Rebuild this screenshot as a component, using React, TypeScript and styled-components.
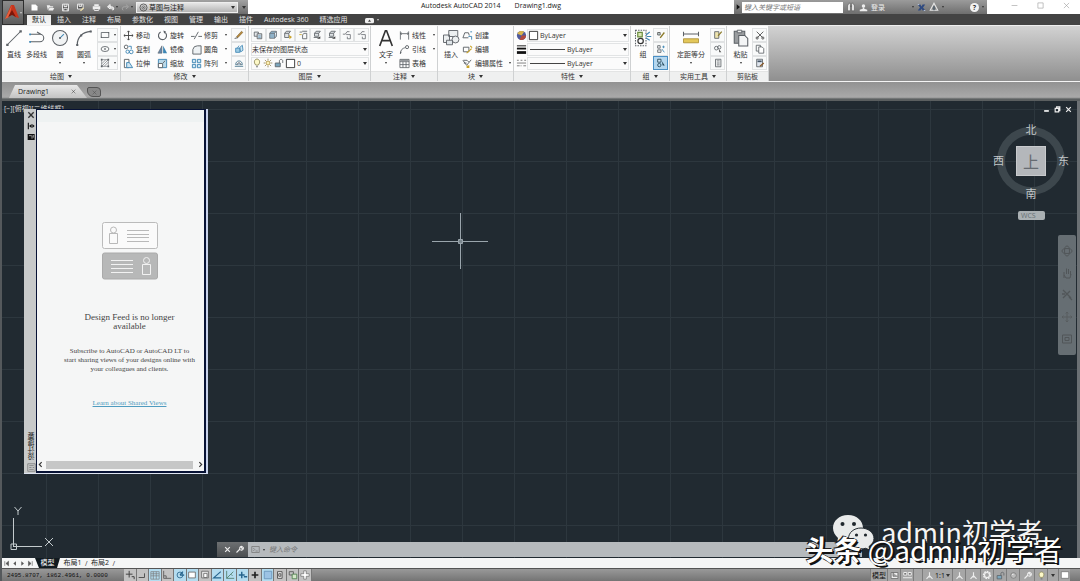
import React from "react";
import styled, { createGlobalStyle } from "styled-components";

const Global = createGlobalStyle`
  *, *::before, *::after { box-sizing: border-box; }
  html, body { margin: 0; padding: 0; }
  body {
    background: #3d3f41;
    font: 7px/9px "Open Sans", "Noto Sans CJK SC", sans-serif;
    color: #333;
    overflow: hidden;
  }
  button, input, select { font: inherit; color: inherit; margin: 0; padding: 0; border: 0; background: none; }
  button { cursor: pointer; white-space: nowrap; }
  svg { display: block; flex: none; }
  p, h2 { margin: 0; }
`;

/* ---------- icons ---------- */

const G = "#5c6166";
const B = "#3d86b4";
const Y = "#c9a227";

const glyphs: Record<string, React.ReactNode> = {
  line: <><path d="M2 10 10 2" stroke={G} strokeWidth=".7" /><path d="M.8 9.800h1.600v1.600H.8zM9.600.8h1.600v1.600H9.600z" fill={G} /></>,
  polyline: <><path d="M2 3.500h6a2.500 2.500 0 0 1 0 5H1.500M6 2l2.600 1.500" stroke={G} strokeWidth=".7" /><path d="M.8 3H2v1.200H.8zM.8 8H2v1.200H.8z" fill={B} /></>,
  circle: <><circle cx="6" cy="6" r="5" stroke={G} strokeWidth=".7" fill="#f1f3f4" /><path d="m6 6 2.600-2.600" stroke={B} strokeWidth=".7" /><circle cx="6" cy="6" r=".7" fill={G} /></>,
  arc: <><path d="M1.500 10.500C1.500 5.500 5 2 10.500 1.600" stroke={G} strokeWidth=".8" /><path d="M.8 10h1.400v1.400H.8zM9.800 1h1.400v1.400H9.800zM3.400 3.600h1.400V5H3.400z" fill={G} /></>,
  rect: <><path d="M1.500 3h9v6h-9z" stroke={G} /><path d="M1 8.200h1.400v1.400H1zM9.600 2.400H11v1.400H9.600z" fill={G} /></>,
  ellipse: <><ellipse cx="6" cy="6" rx="4.700" ry="3" stroke={G} /><path d="M6 5v2M5 6h2" stroke={G} /></>,
  hatch: <><path d="M2 2h8v8H2zM2 7l5-5M2 10l8-8M5 10l5-5" stroke={G} strokeWidth=".7" /><path d="M1 1h2v2H1zM9 1h2v2H9zM1 9h2v2H1zM9 9h2v2H9z" fill={G} /></>,
  move: <path d="M6 1v10M1 6h10M4.700 2.400 6 1l1.300 1.400M4.700 9.600 6 11l1.300-1.400M2.400 4.700 1 6l1.400 1.300M9.600 4.700 11 6 9.600 7.300" stroke="#444" />,
  rotate: <><path d="M4 2.200a4.400 4.400 0 1 0 4.200.1" stroke={G} strokeWidth="1.200" /><path d="m7 .6 2.800 1L7.800 4z" fill={G} /></>,
  trim: <path d="M0 7h4M8 7h4M3.500 10 8 2" stroke={G} />,
  copy: <><circle cx="3.400" cy="3.200" r="2" stroke={G} /><path d="M6 2.500h3v3" stroke={B} /><circle cx="5" cy="8.400" r="1.800" stroke={B} /><circle cx="9" cy="8.600" r="2" stroke={B} /></>,
  mirror: <><path d="M5.400 2v8H1z" fill="#68a" stroke={G} strokeWidth=".6" /><path d="M6.700 2v8H11z" fill={B} /></>,
  fillet: <path d="M2 11V6a5 5 0 0 1 5-4h4v9z" stroke={G} fill="#eef2f4" />,
  stretch: <><path d="M1.500 1.500h5v9h-5z" stroke={G} /><path d="M4 5h3l3.500 5.500H4z" stroke={B} fill="#cfe4f0" /></>,
  scale: <><path d="M1.500 1.500h9v9h-9z" stroke={B} fill="#b9d9ea" /><path d="M1.500 6h4.600v4.500H1.500z" fill="#fff" stroke={G} /><path d="m6.500 5.400 2.500-2.500" stroke={G} /></>,
  array: <path d="M1.500 1.500h3.600v3.600H1.500zM7 1.500h3.600v3.600H7zM1.500 7h3.600v3.600H1.500zM7 7h3.600v3.600H7z" stroke={B} fill="#d5e8f2" />,
  erase: <><path d="m3 8 6-6.500 1.600 1.400L4.600 9.200z" fill="#b98a3c" stroke="#6d5426" strokeWidth=".6" /><path d="M1 10.600c1-2 2-.5 3.400-1.200" stroke="#333" /></>,
  explode: <><path d="M2 5h5v5H2z" fill="#9ccbe3" stroke={B} /><path d="m7 4 3-2.500.8 6L8 9.500z" stroke={B} fill="#cfe6f1" /><path d="M4 5 6 2" stroke={B} /></>,
  offset: <><path d="M1 10h10M2 8c0-6 8-6 8 0z" stroke="#46728c" /><path d="M4 8c0-3 4-3 4 0" stroke={G} fill="#bcd" /></>,
  layerA: <><path d="M1.500 2.500h5v5h-5z" stroke={G} fill="#e4e7e9" /><path d="M5 4.500h5.500v6H5z" fill="#d7dce0" stroke={G} /><path d="M6.300 7h3M6.300 8.800h3" stroke={B} strokeWidth=".7" /></>,
  layerB: <><path d="m2 4 2-2.500h6L8 4zM2 4v6h5.800V4M8 10l2.200-2.400V1.600" stroke={G} fill="#8fb2c9" strokeWidth=".8" /></>,
  layerC: <><path d="m2 4 2-2.500h5L7 4zM2 4v5h5V4" stroke={G} fill="#dfe3e6" /><path d="m7.200 6 3.600 2.500-3 2.600z" fill={Y} /></>,
  layerD: <><path d="M2 2.500h3M5 1.500h6M7 4h3.500v6.500H5.500V6z" stroke={G} fill="none" /><path d="M1.500 5.500h3" stroke={Y} /></>,
  layerE: <><path d="m3 4 2-2.500h5L8 4zM3 4v3.500h5V4M2 9h6" stroke={G} fill="#dfe3e6" /><path d="m6 10.500 4-3v3z" fill="#444" /></>,
  layerF: <path d="M1 5h3l2-3h3M5 5.500h5v5H6.400V8" stroke={G} strokeWidth=".9" />,
  bulb: <><path d="M4.500 8.500C1.500 5 3 1.300 6 1.300S10.500 5 7.500 8.500z" stroke="#8a8456" fill="#fdf9c8" /><path d="M4.800 10.500h2.400" stroke={G} /></>,
  sun: <><circle cx="6" cy="6" r="2.400" stroke="#a98c3e" fill="#fdf2b8" /><path d="M6 .8v1.700M6 9.500v1.700M.8 6h1.700M9.500 6h1.700M2.300 2.300l1.200 1.200M8.500 8.500l1.200 1.200M2.300 9.700l1.200-1.200M8.500 3.500l1.200-1.200" stroke="#8d8055" /></>,
  lock: <><path d="M1.500 6h6v4.500h-6z" fill="#7ba6bd" stroke={G} /><path d="M6.500 6V3.500c0-2.400 4-2.400 4 0V6" stroke={G} /></>,
  swatch: <path d="M1.500 1.500h9v9h-9z" fill="#fff" stroke="#333" />,
  linear: <path d="M1.500 1.500v9M10.500 1.500v9M1.500 4h9M3 3 1.500 4 3 5M9 3l1.500 1L9 5" stroke={G} strokeWidth=".9" />,
  leader: <><path d="M1.500 10.500C2 6 4 4.500 7 4" stroke={G} /><circle cx="8.800" cy="3.400" r="1.700" stroke={G} /><path d="m1 11 .2-2.800L3 9.500z" fill={G} /></>,
  table: <path d="M1 1.500h10v9H1zM1 4h10M1 7.200h10M4.300 4v6.500M7.700 4v6.500M1.500 2.500h9" stroke={G} strokeWidth=".9" />,
  text: <path d="M1.800 11.300 5.600 1.200h.8l3.800 10.100M3.200 7.700h5.600" stroke="#333" strokeWidth="1.100" />,
  insert: <><path d="M4.500 1h6v4h-6zM1 4h4v5H1z" stroke={G} fill="#eceff0" strokeWidth=".6" /><circle cx="9" cy="7" r="2.300" stroke={G} fill="#eceff0" strokeWidth=".6" /><path d="M3 7.500h4v3H3z" stroke={G} fill="#dfe5e9" strokeWidth=".6" /></>,
  blockNew: <><path d="M1 8.500 3 3h4l1 3M1 8.500h6" stroke={G} /><path d="M7 7h3.500v3.500M9 2h2" stroke={B} /></>,
  blockEdit: <><path d="M1.500 3.500h6v5h-6z" stroke={G} /><path d="m5 10 5.500-5M9 2l2 2" stroke={Y} strokeWidth="1.300" /></>,
  blockAttr: <><path d="M1 2.500 5 8l5-6M2 5.500h3M1.500 2.500h4l2 2" stroke={G} /><path d="m5 8.500 3-.5v3H5z" fill={Y} /></>,
  wheel: <><circle cx="6" cy="6" r="5" fill="#4e5a9c" /><path d="M6 6 1.500 4A5 5 0 0 1 9 2z" fill="#d9b44a" /><path d="M6 6h5a5 5 0 0 1-7 4.500z" fill="#b44a3c" /></>,
  weight: <><path d="M1 2h10" stroke="#111" /><path d="M1 5h10" stroke="#111" strokeWidth="2" /><path d="M1 9.300h10" stroke="#111" strokeWidth="3" /></>,
  ltype: <path d="M1 2.500h2M5 2.500h2M9 2.500h2M1 5.500h10M1 8.500h3M5 8.500h1M8 8.500h3" stroke="#777" />,
  group: <><path d="M1 .8h7v10.400H1z" stroke={G} strokeDasharray="1 .7" strokeWidth=".7" /><path d="M2.500 2.300h3v3h-3z" stroke="#6a8d3e" fill="#dbe6b5" strokeWidth=".8" /><circle cx="4.400" cy="8" r="1.800" stroke="#333" strokeWidth=".8" /><path d="m8 4 2.500-2M8.500 5h3M8 6l2.500 1.500" stroke={B} strokeWidth=".7" /></>,
  gEdit: <><path d="M2 3h3v3H2z" stroke="#555" fill="#cdd" /><path d="m5 9.500 5-6.500" stroke="#8b7a28" strokeWidth="1.600" /></>,
  gPlus: <><path d="M2 2h3v3H2zM2 7h4v3H2z" stroke={G} /><path d="M7.500 3.500h3M9 2v3" stroke={B} /><path d="m7 6 3 4" stroke={B} /></>,
  gSel: <><path d="M2 1.500h4v3.500H2z" stroke="#245" fill="#cfe4f4" /><circle cx="4" cy="8.500" r="2" stroke="#245" /><path d="m7 4 3.500 5H8z" fill="#245" /></>,
  measure: <><path d="M1 3.300h10M1 1.800v3M11 1.800v3" stroke={G} strokeWidth=".7" /><path d="M1 6.500h10v2.700H1z" fill="#e3c75a" stroke="#a4852a" strokeWidth=".5" /></>,
  quick: <><path d="M2 2h5v8H2z" stroke={G} fill="#eee5b0" /><path d="m6 7 4.500-5" stroke="#8b7a28" strokeWidth="1.500" /></>,
  find: <><circle cx="4" cy="5" r="2.200" stroke={G} /><circle cx="7.500" cy="4" r="2" stroke={G} /><path d="m7 6 3 4H7.500z" fill="#555" /></>,
  calc: <path d="M3 1.500h6.500v9H3zM4.500 3.500h3.500M4.500 6h3.500M4.500 8.300h3.500" stroke={G} />,
  paste: <><path d="M1.500 1.500h7v8h-7z" stroke={G} fill="#9a9da0" strokeWidth=".7" /><path d="M3.500.8h3v1.700h-3z" fill="#eee" stroke={G} strokeWidth=".6" /><path d="M4.500 4.300h4l2 2v5h-6z" stroke={G} fill="#f4f5f6" strokeWidth=".7" /></>,
  cut: <><path d="m2 2 7 7M10 2 3 9" stroke="#444" /><circle cx="2.600" cy="9.600" r="1.300" stroke="#444" /><circle cx="9.400" cy="9.600" r="1.300" stroke="#444" /></>,
  pages: <><path d="M1.500 1.500h5v7h-5z" stroke={G} /><path d="M4.500 3.500h4l2 2v5.500h-6z" stroke={G} fill="#fff" /></>,
  special: <><path d="M2 1.500h7v9H2z" stroke={G} fill="#dfe6ef" /><path d="M3 3h5v2H3z" fill="#456" /><path d="m6 10 4.500-4" stroke="#8a5a2a" strokeWidth="1.600" /></>,
  new: <path d="M2 2h5.500L10 4.500V10H2z" fill="#fff" />,
  open: <path d="M1 3h4l1 1.300h3.500V6H4L2.500 9.500zM4.600 6.700H11L9.300 10H3z" fill="#eee" />,
  save: <path d="M2 1.500h8v9H2zM4 1.500v3.200h4V1.500M3.700 10.500V7h4.600v3.500" fill="#555" stroke="#f2f2f2" strokeWidth="1.200" />,
  saveAs: <><path d="M2 1.500h7.500V8H2zM4 1.500v3h3.500v-3" fill="#555" stroke="#f2f2f2" strokeWidth="1.200" /><path d="m6 10.500 4-4" stroke="#f3e1a0" strokeWidth="1.700" /></>,
  print: <><path d="M3 1.500h6V4H3zM1 4.300h10V8.500H1zM3 7.500h6v3.300H3z" fill="#eee" /><path d="M3.500 8.800h5" stroke="#666" /></>,
  undo: <path d="M3 5h4.500C11 5 11 9 9 9.600M5.500 2 2 5l3.500 3z" stroke="#f4f4f4" strokeWidth="1.300" fill="#f4f4f4" fillOpacity=".7" />,
  redo: <path d="M9 5H4.500C1 5 1 9 3 9.600M6.500 2 10 5 6.500 8" stroke="#aaa" strokeWidth="1.100" />,
  gear: <><circle cx="6" cy="6" r="4.700" stroke="#555" strokeWidth="1.200" /><circle cx="6" cy="6" r="2.200" stroke="#555" /><circle cx="6" cy="6" r=".8" fill="#555" /></>,
  gearLight: <><circle cx="6" cy="6" r="4" stroke="#f0f0f0" strokeWidth="2" strokeDasharray="2 1" /><circle cx="6" cy="6" r="3" stroke="#eee" strokeWidth="1.400" /></>,
  binoc: <path d="M2 10.500V4.500L3.500 1.500h1.700v9zM6.800 10.500v-9h1.700L10 4.500v6zM5 5h2" fill="#eee" stroke="#444" strokeWidth=".6" />,
  user: <><circle cx="6" cy="4" r="2.300" fill="#eee" /><path d="M5 6h2v1.500l4 1.500v2H1V9l4-1.500z" fill="#eee" /></>,
  exchange: <><path d="M1 2h3.500L6 4.500 7.500 2H11L8 6l3 4H7.500L6 7.500 4.500 10H1l3-4z" fill="#2f4a80" /><path d="M1 2h2M9 10h2" stroke="#cdd8ee" /></>,
  a360: <><path d="M6 1.500 10.500 10h-9z" stroke="#e6e6e6" strokeWidth="1.300" /><path d="M6 5v5" stroke="#456" strokeWidth="1.500" /></>,
  snap: <path d="M5 1v8M1 5h8M8 8h3v3" stroke="#444" strokeWidth="1.200" />,
  infer: <path d="M2 9h7V4" stroke="#555" strokeWidth="1.200" />,
  grid: <path d="M1 2h10v9H1zM1 4.500h10M1 7h10M4 2v9M7.500 2v9" stroke="#777" strokeWidth=".8" />,
  ortho: <path d="M2 1v9h9M2 7h3v3" stroke="#555" />,
  polar: <><circle cx="6" cy="6" r="3.500" stroke="#26648d" /><path d="M6 6h5M6 6l3.500-4" stroke="#26648d" strokeWidth="1.500" /></>,
  square: <path d="M2 2.500h8v7H2z" fill="#fff" stroke="#666" />,
  osnap3: <><path d="M2 1.500h8v8H2z" fill="#eee" stroke="#666" /><path d="M4.500 4h4v5h-4z" fill="#fff" stroke="#666" /></>,
  angle: <path d="M10.500 2 2 9.500h9" stroke="#26648d" strokeWidth="1.400" />,
  ducs: <path d="M2 1v9h9M2 10l8-8M7 5l2 2" stroke="#4d7c67" />,
  dyn: <path d="M4.500 2v8M1 6h7M7 8h4" stroke="#26648d" strokeWidth="1.700" />,
  plus: <path d="M6 2v8M2 6h8" stroke="#222" strokeWidth="2" />,
  box: <path d="M1.500 1.500h9v9h-9z" fill="#9cc3e4" stroke="#6591b8" />,
  card: <path d="M3 2h5.500v8H3zM4.500 4.500h2.500v3H4.500z" fill="#eee" stroke="#444" />,
  cycle: <><path d="M1.500 2h5v4h-5z" stroke="#555" /><path d="M5 5h5.500v5.500H5z" stroke="#4a7d4a" fill="#d3e6c8" /></>,
  whitePlus: <path d="M4.500 1h3v3.500H11v3H7.500V11h-3V7.500H1v-3h3.500z" fill="#fff" stroke="#666" strokeWidth=".8" />,
  scaleMan: <path d="M6 1.500V6L2 10.500M6 6l4 4.500M4 8h4" stroke="#eee" strokeWidth="1.500" />,
  views: <path d="M1 2h4v3.500H1zM7 2h4v3.500H7zM0 9h12" stroke="#eee" strokeWidth="1.300" fill="#777" />,
  wrench: <path d="m2 10 5-5M6.500 5.500a2.500 2.500 0 0 1 3-3.500L8.500 3.500l1 1L11 3.500a2.500 2.500 0 0 1-3.500 3" stroke="#eee" strokeWidth="1.500" />,
  sheet: <path d="M1.500 2h9v8h-9z" fill="#fff" stroke="#777" />,
  model: <path d="M1.500 2h9v8h-9zM4 2v5h6" fill="#eee" stroke="#666" />,
  ball: <><circle cx="6" cy="6" r="3.800" fill="#bbb" stroke="#777" /><path d="M4 4.500h2" stroke="#fff" /></>,
  close: <path d="m2 2 8 8M10 2l-8 8" stroke="currentColor" strokeWidth="2" />,
  min: <path d="M2 8.500h8" stroke="currentColor" strokeWidth="3" />,
  restore: <path d="M2 4h6v6H2zM4.500 4V1.500H10V8H8" stroke="currentColor" strokeWidth="2" />,
  thinMin: <path d="M1 6h10" stroke="currentColor" />,
  thinMax: <path d="M1.500 1.500h9v9h-9z" stroke="currentColor" />,
  thinClose: <path d="m1.500 1.500 9 9M10.500 1.500l-9 9" stroke="currentColor" />,
  dock: <><path d="M2 1v10" stroke="#111" strokeWidth="1.700" /><path d="m3 6 4-3v6zM8 3l3.500 3L8 9z" fill="#111" /></>,
  props: <><path d="M1 1.500h10.500v9H1z" fill="#111" /><path d="M3 4h4M7.500 4v4.500M9.500 3v4" stroke="#ddd" /></>,
  feed: <path d="M1 1h10v10H1zM3 3.500h6M3 6h3M7.500 6h2M3 8.500h6" stroke="#777" />,
  first: <path d="M3 2v8M9.500 2 5 6l4.500 4z" stroke="#555" fill="#555" />,
  prev: <path d="M8.500 2 4 6l4.500 4z" fill="#555" />,
  next: <path d="M4 2l4.500 4L4 10z" fill="#555" />,
  last: <path d="M9 2v8M2.500 2 7 6l-4.500 4z" stroke="#555" fill="#555" />,
  prompt: <path d="M1 2h10v8H1zM3 4l2 2-2 2M6 8h3" stroke="#777" />,
  chevL: <path d="M8 2 4 6l4 4" stroke="#333" strokeWidth="2" />,
  chevR: <path d="m4 2 4 4-4 4" stroke="#333" strokeWidth="2" />,
  play: <path d="M4 2l5 4-5 4z" fill="#111" />,
  pill: <><rect x="0" y="2.500" width="12" height="7" rx="2" fill="#eee" /><path d="M4 7.500 6 4.800l2 2.700z" fill="#444" /></>,
  hand: <path d="M3 11V5M5.500 7V1.500M7.500 7V2M9.500 8V4M3 8l2 3h4l1-4" stroke="#333" />,
  orbit: <><ellipse cx="6" cy="6" rx="5" ry="2.500" stroke="#333" /><ellipse cx="6" cy="6" rx="2.500" ry="5" stroke="#333" /></>,
  zoomX: <path d="m2 1 8 8M9 2 2 9M8 8l3 3M1 5h3" stroke="#333" strokeWidth="1.300" />,
  motion: <path d="M1.500 2h9v8h-9zM4 4.500h4v3H4z" stroke="#333" />,
};

const Icon = ({ name, size = 11 }: { name: string; size?: number }) => (
  <svg width={size} height={size} viewBox="0 0 12 12" fill="none" aria-hidden="true">{glyphs[name]}</svg>
);

const Caret = styled.i<{ $small?: boolean; $light?: boolean }>`
  flex: none;
  width: 0;
  height: 0;
  border: solid transparent;
  border-width: ${(p) => (p.$small ? "2px 1px 0" : "3px 2px 0")};
  border-top-color: ${(p) => (p.$light ? "#ccc" : "#333")};
  pointer-events: none;
`;

/* ---------- title area ---------- */

const Shell = styled.div`
  position: relative;
`;

const Frame = styled.div`
  display: flex;
  flex-direction: column;
  min-height: 100vh;
  border-left: 2px solid #55595c;
`;

const Header = styled.header`
  display: flex;
  background: #434343;
`;

const Logo = styled.button`
  display: flex;
  align-items: center;
  justify-content: center;
  gap: 1px;
  width: 22px;
  height: 25px;
  background: linear-gradient(#8c8c8c, #5c5c5c);
  border: 1px solid #2e2e2e;
`;

const HeaderMain = styled.div`
  flex: 1;
  min-width: 0;
`;

const TitleBar = styled.div`
  display: flex;
  height: 14px;
  background: #fff;
`;

const QuickBar = styled.div`
  display: flex;
  align-items: center;
  gap: 1px;
  width: 224px;
  padding-left: 3px;
  background: linear-gradient(#a2a2a2, #6d6d6d);
`;

const QuickButton = styled.button`
  display: flex;
  align-items: center;
  justify-content: center;
  gap: 1px;
  flex: 1;
  height: 13px;
`;

const QuickSet = styled.div`
  display: flex;
  width: 108px;
`;

const Workspace = styled.label`
  display: flex;
  align-items: center;
  gap: 1px;
  flex: 1;
  height: 11px;
  padding: 0 2px;
  background: linear-gradient(#e6e6e6, #b4b4b4);
  border: 1px solid #eee;
  color: #222;
`;

const BareSelect = styled.select`
  appearance: none;
  flex: 1;
  min-width: 0;
  height: 11px;
  outline: 0;
`;

const QuickEnd = styled.button`
  display: flex;
  align-items: center;
  justify-content: center;
  width: 9px;
  height: 14px;
`;

const Title = styled.div`
  display: flex;
  flex: 1;
  justify-content: center;
  gap: 14px;
  padding-top: 1px;
  color: #222;
  white-space: nowrap;
`;

const SearchArea = styled.div`
  display: flex;
  align-items: center;
  width: 253px;
  background: linear-gradient(#9b9b9b, #6e6e6e);
  color: #eee;
`;

const SearchInput = styled.input`
  width: 101px;
  height: 11px;
  padding: 0 2px;
  background: #fff;
  font-style: italic;
  &::placeholder { color: #777; opacity: 1; }
`;

const AccountTools = styled.div`
  display: flex;
  align-items: center;
  flex: 1;
  gap: 3px;
  padding: 0 3px;
`;

const FlatButton = styled.button`
  display: flex;
  align-items: center;
  gap: 3px;
`;

const Spacer = styled.span`
  flex: 1;
`;

const Help = styled.span`
  width: 9px;
  height: 9px;
  border-radius: 50%;
  background: #f2f2f2;
  color: #333;
  font-weight: 700;
  line-height: 9px;
  text-align: center;
`;

const WindowButtons = styled.div`
  display: flex;
  align-items: center;
  justify-content: space-around;
  width: 93px;
  padding: 0 0 4px 14px;
  color: #999;
`;

const RibbonTabs = styled.nav`
  display: flex;
  align-items: flex-end;
  height: 11px;
  padding-left: 3px;
`;

const RibbonTab = styled.button<{ $active?: boolean }>`
  height: 10px;
  padding: 0 5px;
  min-width: 24px;
  margin-right: 1px;
  line-height: 10px;
  color: ${(p) => (p.$active ? "#222" : "#e2e2e2")};
  background: ${(p) => (p.$active ? "linear-gradient(#e8e8e8, #f7f7f7)" : "none")};
`;

const TabMenu = styled.button`
  display: flex;
  align-items: center;
  gap: 3px;
  height: 10px;
  margin-left: 12px;
`;

/* ---------- ribbon ---------- */

const Ribbon = styled.div`
  display: flex;
  height: 57px;
  border-top: 1px solid #eee;
  border-bottom: 1px solid #f4f4f4;
  background: linear-gradient(#d2d2d2, #8f8f8f);
`;

const Panel = styled.section<{ $w: number }>`
  display: flex;
  flex-direction: column;
  flex: none;
  width: ${(p) => p.$w}px;
  background: #fdfdfd;
  border-right: 1px solid #cfd1d2;
`;

const PanelBody = styled.div`
  display: flex;
  flex: 1;
  padding: 2px 1px 0 2px;
`;

const PanelTitle = styled.button`
  display: flex;
  align-items: center;
  justify-content: center;
  gap: 4px;
  height: 10px;
  background: #eff0f0;
  border-top: 1px solid #e3e4e4;
`;

const BigTool = styled.button<{ $w: number }>`
  display: flex;
  flex-direction: column;
  align-items: center;
  gap: 3px;
  width: ${(p) => p.$w}px;
  height: 40px;
  padding-top: 1px;
`;

const ToolColumn = styled.div<{ $grow?: boolean }>`
  display: flex;
  flex-direction: column;
  flex: ${(p) => (p.$grow ? 1 : "none")};
  min-width: 0;
`;

const Tool = styled.button<{ $w?: number }>`
  display: flex;
  align-items: center;
  gap: 2px;
  width: ${(p) => (p.$w ? p.$w + "px" : "auto")};
  height: 14px;
`;

const SmallTool = styled.button<{ $active?: boolean; $wide?: boolean }>`
  display: flex;
  align-items: center;
  justify-content: center;
  gap: 4px;
  width: ${(p) => (p.$wide ? 21 : 15)}px;
  height: 14px;
  border: 1px solid ${(p) => (p.$active ? "#4a8fc4" : "#e0e2e3")};
  background: ${(p) => (p.$active ? "#b5d7ef" : "#f9fafa")};
`;

const ToolRow = styled.div`
  display: flex;
  align-items: center;
  height: 14px;
`;

const Combo = styled.label`
  display: flex;
  align-items: center;
  flex: 1;
  gap: 1px;
  height: 13px;
  padding-right: 1px;
  border: 1px solid #e2e4e5;
  background: #fbfbfb;
`;

const LineSample = styled.i`
  width: 35px;
  margin: 0 1px 0 2px;
  border-top: 1px solid #444;
`;

/* ---------- file tabs ---------- */

const FileTabs = styled.div`
  display: flex;
  align-items: flex-end;
  height: 19px;
  padding: 0 0 3px 7px;
  background: linear-gradient(#929292, #a9a9a9 80%, #5b5f60 90%);
`;

const FileTab = styled.div`
  display: flex;
  align-items: center;
  justify-content: space-between;
  width: 78px;
  height: 13px;
  padding: 0 11px 0 9px;
  background: linear-gradient(#e8e8e8, #c3c3c3);
  clip-path: polygon(6px 0, 68px 0, 100% 100%, 0 100%);
  color: #222;
`;

const NewTab = styled.button`
  display: flex;
  align-items: center;
  justify-content: center;
  width: 14px;
  height: 10px;
  margin-bottom: 1px;
  border: 1px solid #555;
  border-radius: 2px 4px 2px 6px;
  background: #888;
  color: #444;
`;

/* ---------- drawing canvas ---------- */

const Canvas = styled.main`
  position: relative;
  flex: 1;
  min-height: 320px;
  border-right: 3px solid #6b7074;
  background-color: #212a31;
  background-image:
    linear-gradient(90deg, #2d373e 1px, transparent 1px),
    linear-gradient(#2d373e 1px, transparent 1px);
  background-size: 52px 52px;
  background-position: 44px 0, 0 8px;
  overflow: hidden;
`;

const ViewLabel = styled.div`
  position: absolute;
  left: 2px;
  top: 3px;
  color: #ddd;
`;

const Palette = styled.aside`
  position: absolute;
  left: 22px;
  top: 8px;
  display: flex;
  width: 184px;
  height: 365px;
  background: #c8caca;
  border-right: 2px solid #c9d3ec;
  border-bottom: 1px solid #dde3f0;
`;

const PaletteRail = styled.div`
  display: flex;
  flex-direction: column;
  align-items: center;
  gap: 3px;
  width: 12px;
  padding: 2px 0 1px 2px;
`;

const RailTitle = styled.span`
  writing-mode: vertical-rl;
  transform: rotate(180deg);
  color: #222;
  line-height: 9px;
`;

const PalettePage = styled.div`
  display: flex;
  flex-direction: column;
  flex: 1;
  border: 1px solid #071235;
  border-width: 1px 2px 2px 1px;
  background: #f5f6f6;
`;

const PaletteHead = styled.div`
  height: 12px;
  background: #eef2f2;
`;

const FeedMessage = styled.div`
  display: flex;
  flex-direction: column;
  align-items: center;
  flex: 1;
  padding: 100px 0 0 18px;
  color: #444;
  font-family: "Liberation Serif", "Noto Sans CJK SC", serif;
  text-align: center;
`;

const FeedHeading = styled.h2`
  margin-top: 33px;
  width: 100px;
  font-size: 9px;
  line-height: 9px;
  font-weight: 400;
`;

const FeedText = styled.p`
  margin-top: 16px;
  white-space: pre-line;
`;

const FeedLink = styled.a`
  margin-top: 25px;
  color: #4f9cc0;
`;

const ScrollBar = styled.div`
  display: flex;
  align-items: center;
  gap: 1px;
  height: 11px;
  padding-bottom: 2px;
`;

const ScrollThumb = styled.div`
  flex: 1;
  height: 8px;
  margin: 0 3px 0 1px;
  background: #c6c7c7;
`;

const Crosshair = styled.svg`
  position: absolute;
  left: 430px;
  top: 112px;
`;

const Ucs = styled.svg`
  position: absolute;
  left: 8px;
  bottom: 6px;
`;

const DocButtons = styled.div`
  position: absolute;
  right: 5px;
  top: 5px;
  display: flex;
  gap: 4px;
  color: #eee;
`;

const Compass = styled.div`
  position: absolute;
  right: 12px;
  top: 26px;
  display: grid;
  place-items: center;
  width: 68px;
  height: 68px;
  border: 8px solid #3d474d;
  border-radius: 50%;
`;

const CompassTop = styled.button`
  width: 30px;
  height: 30px;
  background: #b4b7bb;
  border: 1px solid #c8cacd;
  color: #666b71;
  font: 16px/26px "Noto Sans CJK SC", sans-serif;
`;

const CompassMark = styled.span<{ $side: "n" | "e" | "s" | "w" }>`
  position: absolute;
  color: #c3c7ca;
  font-size: 11px;
  line-height: 12px;
  ${(p) => ({
    n: "top: -11px;",
    s: "bottom: -13px;",
    e: "right: -12px;",
    w: "left: -12px;",
  })[p.$side]}
`;

const Wcs = styled.button`
  position: absolute;
  right: 32px;
  top: 110px;
  width: 27px;
  height: 9px;
  padding-left: 3px;
  border-radius: 2px;
  background: #aab0b3;
  color: #687075;
  line-height: 9px;
  text-align: left;
`;

const NavBar = styled.div`
  position: absolute;
  right: 1px;
  top: 134px;
  display: flex;
  flex-direction: column;
  align-items: center;
  justify-content: space-between;
  width: 18px;
  height: 120px;
  padding: 10px 0;
  border-radius: 2px;
  background: #666e73;
`;

const NavItem = styled.button`
  opacity: .4;
`;

const CommandLine = styled.div`
  position: absolute;
  left: 215px;
  bottom: 1px;
  display: flex;
  align-items: center;
  width: 60%;
  height: 15px;
  background: #b6babd;
`;

const CommandTools = styled.div`
  display: flex;
  align-items: center;
  justify-content: space-evenly;
  width: 31px;
  height: 15px;
  padding-left: 3px;
  background: linear-gradient(#6d7072, #4c4f51);
  color: #eee;
`;

const CommandInput = styled.input`
  flex: 1;
  min-width: 0;
  padding-left: 4px;
  font-style: italic;
  &::placeholder { color: #777; opacity: 1; }
`;

/* ---------- bottom bars ---------- */

const LayoutTabs = styled.nav`
  display: flex;
  align-items: center;
  height: 10px;
  padding-left: 1px;
  background: #f5f6f6;
`;

const LayoutStep = styled.button`
  width: 8px;
  height: 9px;
`;

const LayoutTab = styled.button<{ $active?: boolean }>`
  height: 10px;
  min-width: 25px;
  padding: 0 3px;
  line-height: 10px;
  color: ${(p) => (p.$active ? "#fff" : "#222")};
  background: ${(p) => (p.$active ? "#111a1f" : "none")};
  clip-path: ${(p) => (p.$active ? "polygon(0 0, 100% 0, 22px 100%, 4px 100%)" : "none")};
`;

const StatusBar = styled.footer`
  display: flex;
  align-items: center;
  height: 13px;
  background: linear-gradient(#999, #747474);
  border-top: 1px solid #555;
`;

const Coordinates = styled.span`
  width: 122px;
  padding-left: 5px;
  font-family: "Liberation Mono", monospace;
  font-size: 6px;
  color: #111;
  white-space: nowrap;
`;

const Toggles = styled.div`
  display: flex;
  width: 188px;
`;

const Toggle = styled.button<{ $on?: boolean }>`
  display: flex;
  align-items: center;
  justify-content: center;
  flex: 1;
  height: 12px;
  border-right: 1px solid #777;
  background: ${(p) => (p.$on ? "#b4dcef" : "#c2c2c2")};
`;

const StatusButton = styled.button<{ $w: number }>`
  display: flex;
  align-items: center;
  justify-content: center;
  gap: 1px;
  width: ${(p) => p.$w}px;
  height: 12px;
  color: #111;
  background: #a6a6a6;
  border-left: 1px solid #7d7d7d;
`;

const Grip = styled.span`
  width: 10px;
`;

/* ---------- overlay marks ---------- */

const UpperMark = styled.div`
  position: absolute;
  right: 37px;
  bottom: 31px;
  display: flex;
  align-items: center;
  gap: 6px;
  color: #f5f5f5;
  font: 27px/36px "Noto Sans CJK SC", sans-serif;
  text-shadow: 1px 1px 1px #222;
  white-space: nowrap;
`;

const LowerMark = styled.div`
  position: absolute;
  right: 18px;
  bottom: 13px;
  color: #fff;
  font: 28px/38px "Noto Sans CJK SC", sans-serif;
  text-shadow: 2px 2px 0 #111, -1px -1px 0 #222, 1px 0 0 #111;
  white-space: nowrap;
`;

const tabs = ["默认", "插入", "注释", "布局", "参数化", "视图", "管理", "输出", "插件", "Autodesk 360", "精选应用"];
const quick = ["new", "open", "save", "saveAs", "print"];
const modify = [
  [["move", "移动"], ["copy", "复制"], ["stretch", "拉伸"]],
  [["rotate", "旋转"], ["mirror", "镜像"], ["scale", "缩放"]],
  [["trim", "修剪"], ["fillet", "圆角"], ["array", "阵列"]],
];
const layerTools = ["layerA", "layerB", "layerC", "layerD", "layerE", "layerE", "layerF", "layerF"];
const toggles: [string, boolean][] = [
  ["snap", false], ["infer", false], ["grid", true], ["ortho", false], ["polar", true],
  ["square", true], ["osnap3", false], ["angle", true], ["ducs", true], ["dyn", true],
  ["plus", false], ["box", true], ["card", false], ["cycle", false], ["whitePlus", false],
];

const Big = ({ icon, label, w, caret }: { icon: string; label: string; w: number; caret?: boolean }) => (
  <BigTool $w={w}>
    <Icon name={icon} size={18} />
    <span>{label}</span>
    {caret && <Caret $small />}
  </BigTool>
);

const Footer = ({ children, caret = true }: { children: string; caret?: boolean }) => (
  <PanelTitle>{children}{caret && <Caret />}</PanelTitle>
);

export default function App() {
  return (
    <Shell>
      <Global />
      <Frame>
        <Header>
          <Logo aria-label="应用程序菜单">
            <svg width="14" height="17" viewBox="0 0 14 17">
              <path d="M6 1h3l5 13-4-1-3-6-3 6-4 2z" fill="#c7351c" />
              <path d="M7 1 4 13l-4 2z" fill="#e7623f" />
              <path d="m7 6 4 7-4-2-4 2z" fill="#7c1609" />
            </svg>
            <Caret $small $light />
          </Logo>
          <HeaderMain>
            <TitleBar>
              <QuickBar>
                <QuickSet>
                  {quick.map((n) => <QuickButton key={n} aria-label={n}><Icon name={n} size={9} /></QuickButton>)}
                  <QuickButton aria-label="undo"><Icon name="undo" size={9} /><Caret $small /></QuickButton>
                  <QuickButton aria-label="redo"><Icon name="redo" size={9} /><Caret $small /></QuickButton>
                </QuickSet>
                <Workspace>
                  <Icon name="gear" size={9} />
                  <BareSelect aria-label="工作空间"><option>草图与注释</option></BareSelect>
                  <Caret />
                </Workspace>
                <QuickEnd aria-label="自定义"><Caret /></QuickEnd>
              </QuickBar>
              <Title><span>Autodesk AutoCAD 2014</span><span>Drawing1.dwg</span></Title>
              <SearchArea>
                <Icon name="play" size={8} />
                <SearchInput aria-label="搜索" placeholder="键入关键字或短语" />
                <AccountTools>
                  <FlatButton aria-label="搜索"><Icon name="binoc" size={10} /></FlatButton>
                  <FlatButton><Icon name="user" size={9} />登录</FlatButton>
                  <Spacer />
                  <Caret $small />
                  <FlatButton aria-label="Exchange"><Icon name="exchange" size={9} /></FlatButton>
                  <FlatButton aria-label="A360"><Icon name="a360" size={10} /><Caret $small /></FlatButton>
                  <Spacer />
                  <FlatButton aria-label="帮助"><Help>?</Help><Caret $small /></FlatButton>
                </AccountTools>
              </SearchArea>
              <WindowButtons>
                <FlatButton aria-label="最小化"><Icon name="thinMin" size={7} /></FlatButton>
                <FlatButton aria-label="最大化"><Icon name="thinMax" size={7} /></FlatButton>
                <FlatButton aria-label="关闭"><Icon name="thinClose" size={7} /></FlatButton>
              </WindowButtons>
            </TitleBar>
            <RibbonTabs>
              {tabs.map((t, i) => <RibbonTab key={t} $active={i === 0}>{t}</RibbonTab>)}
              <TabMenu aria-label="功能区显示"><Icon name="pill" size={9} /><Caret $small $light /></TabMenu>
            </RibbonTabs>
          </HeaderMain>
        </Header>

        <Ribbon>
          <Panel $w={119}>
            <PanelBody>
              <Big icon="line" label="直线" w={20} />
              <Big icon="polyline" label="多段线" w={25} />
              <Big icon="circle" label="圆" w={22} caret />
              <Big icon="arc" label="圆弧" w={26} caret />
              <ToolColumn>
                {["rect", "ellipse", "hatch"].map((n) => (
                  <SmallTool key={n} $wide aria-label={n}><Icon name={n} size={10} /><Caret $small /></SmallTool>
                ))}
              </ToolColumn>
            </PanelBody>
            <Footer>绘图</Footer>
          </Panel>

          <Panel $w={128}>
            <PanelBody>
              {modify.map((col, c) => (
                <ToolColumn key={c}>
                  {col.map(([icon, label]) => (
                    <Tool key={icon} $w={c === 2 ? 40 : 34}>
                      <Icon name={icon} />{label}{c === 2 && <><Spacer /><Caret $small /><Spacer /></>}
                    </Tool>
                  ))}
                </ToolColumn>
              ))}
              <ToolColumn>
                {["erase", "explode", "offset"].map((n) => (
                  <SmallTool key={n} aria-label={n}><Icon name={n} size={10} /></SmallTool>
                ))}
              </ToolColumn>
            </PanelBody>
            <Footer>修改</Footer>
          </Panel>

          <Panel $w={122}>
            <PanelBody>
              <ToolColumn $grow>
                <ToolRow>
                  {layerTools.map((n, i) => <SmallTool key={i} aria-label={n}><Icon name={n} size={10} /></SmallTool>)}
                </ToolRow>
                <ToolRow>
                  <Combo><BareSelect aria-label="图层状态"><option>未保存的图层状态</option></BareSelect><Caret /></Combo>
                </ToolRow>
                <ToolRow>
                  <Combo>
                    <Icon name="bulb" size={10} /><Icon name="sun" size={10} /><Icon name="lock" size={10} /><Icon name="swatch" />
                    <BareSelect aria-label="图层"><option>0</option></BareSelect><Caret />
                  </Combo>
                </ToolRow>
              </ToolColumn>
            </PanelBody>
            <Footer>图层</Footer>
          </Panel>

          <Panel $w={67}>
            <PanelBody>
              <Big icon="text" label="文字" w={26} caret />
              <ToolColumn>
                <Tool $w={36}><Icon name="linear" />线性<Spacer /><Caret $small /></Tool>
                <Tool $w={36}><Icon name="leader" />引线<Spacer /><Caret $small /></Tool>
                <Tool $w={36}><Icon name="table" />表格</Tool>
              </ToolColumn>
            </PanelBody>
            <Footer>注释</Footer>
          </Panel>

          <Panel $w={76}>
            <PanelBody>
              <Big icon="insert" label="插入" w={22} />
              <ToolColumn>
                <Tool $w={49}><Icon name="blockNew" />创建</Tool>
                <Tool $w={49}><Icon name="blockEdit" />编辑</Tool>
                <Tool $w={49}><Icon name="blockAttr" />编辑属性<Spacer /><Caret $small /></Tool>
              </ToolColumn>
            </PanelBody>
            <Footer>块</Footer>
          </Panel>

          <Panel $w={117}>
            <PanelBody>
              <ToolColumn $grow>
                <ToolRow>
                  <Icon name="wheel" />
                  <Combo><Icon name="swatch" /><BareSelect aria-label="颜色"><option>ByLayer</option></BareSelect><Caret /></Combo>
                </ToolRow>
                <ToolRow>
                  <Icon name="weight" />
                  <Combo><LineSample /><BareSelect aria-label="线宽"><option>ByLayer</option></BareSelect><Caret /></Combo>
                </ToolRow>
                <ToolRow>
                  <Icon name="ltype" />
                  <Combo><LineSample /><BareSelect aria-label="线型"><option>ByLayer</option></BareSelect><Caret /></Combo>
                </ToolRow>
              </ToolColumn>
            </PanelBody>
            <Footer>特性</Footer>
          </Panel>

          <Panel $w={39}>
            <PanelBody>
              <Big icon="group" label="组" w={20} />
              <ToolColumn>
                <SmallTool aria-label="编辑组"><Icon name="gEdit" size={10} /></SmallTool>
                <SmallTool aria-label="添加到组"><Icon name="gPlus" size={10} /></SmallTool>
                <SmallTool $active aria-label="选择组"><Icon name="gSel" size={10} /></SmallTool>
              </ToolColumn>
            </PanelBody>
            <Footer>组</Footer>
          </Panel>

          <Panel $w={57}>
            <PanelBody>
              <Big icon="measure" label="定距等分" w={38} caret />
              <ToolColumn>
                {["quick", "find", "calc"].map((n) => (
                  <SmallTool key={n} aria-label={n}><Icon name={n} size={10} /></SmallTool>
                ))}
              </ToolColumn>
            </PanelBody>
            <Footer>实用工具</Footer>
          </Panel>

          <Panel $w={42}>
            <PanelBody>
              <Big icon="paste" label="粘贴" w={23} caret />
              <ToolColumn>
                {["cut", "pages", "special"].map((n) => (
                  <SmallTool key={n} aria-label={n}><Icon name={n} size={10} /></SmallTool>
                ))}
              </ToolColumn>
            </PanelBody>
            <Footer caret={false}>剪贴板</Footer>
          </Panel>
        </Ribbon>

        <FileTabs>
          <FileTab>Drawing1<Icon name="thinClose" size={5} /></FileTab>
          <NewTab aria-label="新图形"><Icon name="thinClose" size={5} /></NewTab>
        </FileTabs>

        <Canvas>
          <ViewLabel>[−][俯视][二维线框]</ViewLabel>

          <Palette>
            <PaletteRail>
              <Icon name="close" size={8} />
              <Icon name="dock" size={8} />
              <Icon name="props" size={8} />
              <Spacer />
              <RailTitle>设计提要</RailTitle>
              <Icon name="feed" size={9} />
            </PaletteRail>
            <PalettePage>
              <PaletteHead />
              <FeedMessage>
                <svg width="56" height="58" viewBox="0 0 56 58" fill="none">
                  <rect x=".5" y=".5" width="55" height="26" rx="2" stroke="#bbb" fill="#fafafa" />
                  <rect x=".5" y="31" width="55" height="26" rx="2" fill="#b7b8b8" stroke="#aaa" />
                  <g stroke="#b9b9b9">
                    <circle cx="11.500" cy="8" r="3" />
                    <path d="M7.500 11.500h8v10h-8z" />
                    <path d="M25 8.500h22M25 12.500h22M25 15.500h22M25 19.500h22" />
                  </g>
                  <g stroke="#f2f2f2">
                    <circle cx="44.500" cy="38.500" r="3" />
                    <path d="M40.500 42.500h8v10h-8z" />
                    <path d="M9 38.500h22M9 42.500h22M9 46.500h22M9 50.500h22" />
                  </g>
                </svg>
                <FeedHeading>Design Feed is no longer available</FeedHeading>
                <FeedText>{"Subscribe to AutoCAD or AutoCAD LT to\nstart sharing views of your designs online with\nyour colleagues and clients."}</FeedText>
                <FeedLink href="#">Learn about Shared Views</FeedLink>
              </FeedMessage>
              <ScrollBar>
                <Icon name="chevL" size={7} /><ScrollThumb /><Icon name="chevR" size={7} />
              </ScrollBar>
            </PalettePage>
          </Palette>

          <Crosshair width="56" height="56" viewBox="0 0 56 56" fill="none" stroke="#9aa5ac">
            <path d="M28.500 0v56M0 28.500h56" />
            <path d="M26.500 26.500h4v4h-4z" fill="#7a868d" />
          </Crosshair>

          <Ucs width="44" height="46" viewBox="0 0 44 46" fill="none" stroke="#c3cacd">
            <path d="M3.500 12v29M4 40.500h28M1 38h5.500v5.500H1z" />
            <path d="m4.500 1 3.500 4 3.500-4M8 5v4M35 32l8 8M43 32l-8 8" />
          </Ucs>

          <DocButtons>
            <FlatButton aria-label="最小化图形"><Icon name="min" size={7} /></FlatButton>
            <FlatButton aria-label="还原图形"><Icon name="restore" size={7} /></FlatButton>
            <FlatButton aria-label="关闭图形"><Icon name="close" size={7} /></FlatButton>
          </DocButtons>

          <Compass>
            <CompassTop>上</CompassTop>
            <CompassMark $side="n">北</CompassMark>
            <CompassMark $side="e">东</CompassMark>
            <CompassMark $side="s">南</CompassMark>
            <CompassMark $side="w">西</CompassMark>
          </Compass>
          <Wcs>WCS</Wcs>
          <NavBar>
            {["orbit", "hand", "zoomX", "move", "motion"].map((n) => (
              <NavItem key={n} aria-label={n}><Icon name={n} size={12} /></NavItem>
            ))}
          </NavBar>

          <CommandLine>
            <CommandTools><Icon name="close" size={7} /><Icon name="wrench" size={9} /></CommandTools>
            <FlatButton aria-label="最近使用的命令"><Spacer /><Icon name="prompt" size={9} /><Caret $small /></FlatButton>
            <CommandInput aria-label="命令" placeholder="键入命令" />
          </CommandLine>
        </Canvas>

        <LayoutTabs>
          {["first", "prev", "next", "last"].map((n) => (
            <LayoutStep key={n} aria-label={n}><Icon name={n} size={7} /></LayoutStep>
          ))}
          <LayoutTab $active>模型</LayoutTab>
          <LayoutTab>布局1</LayoutTab>/
          <LayoutTab>布局2</LayoutTab>/
        </LayoutTabs>

        <StatusBar>
          <Coordinates>2495.8707, 1862.4961, 0.0000</Coordinates>
          <Toggles>
            {toggles.map(([n, on]) => <Toggle key={n} $on={on} aria-label={n}><Icon name={n} size={10} /></Toggle>)}
          </Toggles>
          <Spacer />
          <StatusButton $w={17}>模型</StatusButton>
          <StatusButton $w={13} aria-label="布局"><Icon name="model" size={9} /></StatusButton>
          <StatusButton $w={13} aria-label="快速查看"><Icon name="views" size={9} /></StatusButton>
          <StatusButton $w={9} aria-label="分隔" />
          <StatusButton $w={30}><Icon name="scaleMan" size={9} />1:1<Caret /></StatusButton>
          <StatusButton $w={13} aria-label="注释可见性"><Icon name="scaleMan" size={9} /></StatusButton>
          <StatusButton $w={15} aria-label="自动缩放"><Icon name="scaleMan" size={9} /></StatusButton>
          <StatusButton $w={13} aria-label="切换工作空间"><Icon name="gearLight" size={10} /></StatusButton>
          <StatusButton $w={13} aria-label="锁定"><Icon name="lock" size={9} /></StatusButton>
          <StatusButton $w={13} aria-label="硬件加速"><Icon name="ball" size={9} /></StatusButton>
          <StatusButton $w={15} aria-label="工具"><Icon name="wrench" size={9} /></StatusButton>
          <StatusButton $w={13} aria-label="隔离对象"><Icon name="bulb" size={9} /></StatusButton>
          <StatusButton $w={11} aria-label="状态栏菜单"><Caret /></StatusButton>
          <StatusButton $w={12} aria-label="全屏显示"><Icon name="sheet" size={10} /></StatusButton>
          <Grip />
        </StatusBar>
      </Frame>

      <UpperMark>
        <svg width="43" height="36" viewBox="0 0 43 36">
          <path d="M16 1C7 1 1 7 1 14c0 4 2 7 5 10l-1 5 5-3c2 .7 4 1 6 1 9 0 15-6 15-13S25 1 16 1z" fill="#e9ebeb" />
          <path d="M29 14c-7 0-12.500 4.500-12.500 10.500S22 35 29 35c1.500 0 3-.2 4.500-.7L38 36l-1-3.500c3-2 5-5 5-8C42 18.500 36 14 29 14z" fill="#e9ebeb" stroke="#222a30" />
          <g fill="#20282e"><circle cx="10.500" cy="10" r="2" /><circle cx="22" cy="10" r="2" /><circle cx="24.500" cy="21" r="1.600" /><circle cx="33.500" cy="21" r="1.600" /></g>
        </svg>
        admin初学者
      </UpperMark>
      <LowerMark><b>头条</b> @admin初学者</LowerMark>
    </Shell>
  );
}
